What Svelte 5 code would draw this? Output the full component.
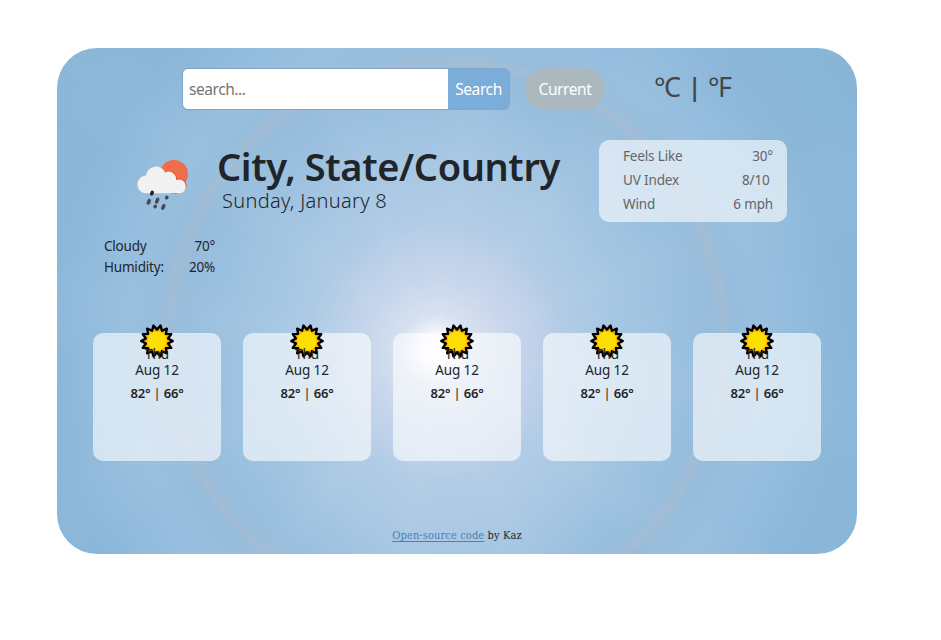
<script>
  const conditions = [
    { label: 'Feels Like', value: '30°' },
    { label: 'UV Index', value: '8/10\u00a0' },
    { label: 'Wind', value: '6 mph' }
  ];
  const days = Array.from({ length: 5 }, () => ({ day: 'Thu', date: 'Aug 12', high: 82, low: 66 }));

  // Alternating tips and notches around the sun's centre
  const sunPoints = Array.from({ length: 28 }, (_, i) => {
    const r = i % 2 ? 11.4 : 15.8;
    const a = (i * Math.PI) / 14 - Math.PI / 2 + Math.PI / 14;
    return `${(18 + r * Math.cos(a)).toFixed(2)},${(18 + r * Math.sin(a)).toFixed(2)}`;
  }).join(' ');
</script>

<main class="weather">
  <header class="toolbar">
    <form class="search" onsubmit={(e) => e.preventDefault()}>
      <input type="text" placeholder="search..." aria-label="search" />
      <button class="go">Search</button>
    </form>
    <button class="current">Current</button>
    <div class="units"><span>°C</span><b>|</b><span>°F</span></div>
  </header>

  <section class="overview">
    <svg class="cloud" width="54" height="54" viewBox="0 0 54 54" aria-hidden="true">
      <circle cx="39" cy="15" r="14" fill="#ee6e4c" />
      <g transform="translate(.6 .3)">
        <path d="M9 34a9 9 0 0 1 1.400-17.800A10 10 0 0 1 29.500 13.300A7.500 7.500 0 0 1 40.500 20.700A7 7 0 1 1 42 34Z" fill="none" stroke="#ef4f27" stroke-width="1.600" clip-path="circle(13.500px at 38.400px 14.700px)" />
        <path d="M9 34a9 9 0 0 1 1.400-17.800A10 10 0 0 1 29.500 13.300A7.500 7.500 0 0 1 40.500 20.700A7 7 0 1 1 42 34Z" fill="#f1f1f2" />
      </g>
      <g stroke="#4a4a4c" stroke-width="3.500" stroke-linecap="round">
        <path d="M17.300 33.300l-.6 1.500" stroke="#222" />
        <path d="M14.300 41.500l-1 2.500M22.800 40.300l-1.200 2.700M31.900 38.300l-.2.500M20.300 47.300l-.2.400M28.900 46.700l-1.100 2.400" />
      </g>
    </svg>
    <div class="place">
      <h1>City, State/Country</h1>
      <p>Sunday, January 8</p>
    </div>
    <dl class="conditions">
      {#each conditions as item}
        <div><dt>{item.label}</dt><dd>{item.value}</dd></div>
      {/each}
    </dl>
  </section>

  <dl class="now">
    <div><dt>Cloudy</dt><dd>70°</dd></div>
    <div><dt>Humidity:</dt><dd>20%</dd></div>
  </dl>

  <section class="forecast">
    {#each days as d}
      <article>
        <svg class="sun" width="36" height="36" viewBox="0 0 36 36" aria-hidden="true">
          <polygon points={sunPoints} fill="#ffb400" stroke="#000" stroke-width="2.400" stroke-linejoin="round" />
          <circle cx="18" cy="18" r="9.600" fill="#fddf00" />
        </svg>
        <span class="day">{d.day}</span>
        <span class="date">{d.date}</span>
        <strong>{d.high}° <i>|</i> {d.low}°</strong>
      </article>
    {/each}
  </section>

  <footer><a href="#source">Open-source code</a> by Kaz</footer>
</main>

<style>
  :global(body) {
    margin: 0;
    background: #fff;
  }
  .weather {
    box-sizing: border-box;
    width: 800px;
    height: 506px;
    margin: 48px 0 0 57px;
    padding-top: 20px;
    border-radius: 40px;
    overflow: hidden;
    display: flex;
    flex-direction: column;
    font-family: 'Noto Sans', 'Open Sans', sans-serif;
    font-size: 14px;
    color: #212529;
    background:
      radial-gradient(circle at 389px 292px, transparent 268px, rgba(190, 188, 200, 0.3) 279px, transparent 287px),
      radial-gradient(circle at 379px 302px, #fff 0, rgba(255, 255, 255, 0.85) 14px, rgba(255, 255, 255, 0.34) 36px, rgba(255, 255, 255, 0.14) 75px, transparent 130px),
      repeating-conic-gradient(from 8deg at 379px 302px, rgba(255, 255, 255, 0.025) 0deg, transparent 9deg, transparent 21deg, rgba(255, 255, 255, 0.025) 30deg),
      radial-gradient(ellipse 170px 320px at 389px 340px, rgba(200, 212, 235, 0.4), transparent),
      radial-gradient(circle at 389px 300px, #c4d0e7 0, #b8cce6 85px, #accae5 130px, #a4c6e2 180px, #9cc1e0 230px, #96bcdb 278px, #98bfdf 320px, #8cb7d9 395px, #88b5d7 500px);
  }
  button,
  input {
    font: inherit;
    font-size: 15.500px;
    padding: 0;
    border: 0;
    box-sizing: border-box;
  }
  .toolbar {
    display: flex;
    height: 42px;
    padding-left: 125px;
  }
  .search {
    display: flex;
    box-sizing: border-box;
    width: 328px;
    border: 1px solid rgba(105, 140, 175, 0.5);
    border-radius: 6px;
    overflow: hidden;
  }
  .search input {
    width: 265px;
    padding: 0 0 1px 6px;
    background: #fff;
    letter-spacing: -0.45px;
    outline: 0;
  }
  .search input::placeholder {
    color: #757575;
    opacity: 1;
  }
  .go {
    flex: 1;
    background: #7aadda;
    color: #fff;
    letter-spacing: -0.4px;
  }
  .current {
    width: 80px;
    margin-left: 15px;
    border-radius: 21px;
    background: #abb8be;
    color: #fff;
    letter-spacing: -0.4px;
  }
  .units {
    display: flex;
    align-items: center;
    gap: 8px;
    height: 36px;
    margin-left: 49px;
    font-size: 27px;
    font-weight: 400;
    letter-spacing: -1.500px;
    color: #43474b;
  }
  .units b {
    font-weight: 600;
    font-size: 25px;
  }
  .overview {
    display: flex;
    align-items: flex-start;
    height: 82px;
    margin-top: 30px;
    padding-left: 78px;
  }
  .cloud {
    margin-top: 19px;
  }
  .place {
    width: 382px;
    margin-left: 28px;
    white-space: nowrap;
  }
  h1 {
    margin: 2px 0 0;
    font-size: 38px;
    line-height: 48px;
    font-weight: 600;
    letter-spacing: -0.4px;
  }
  .place p {
    margin: -3px 0 0 5px;
    font-size: 20px;
    line-height: 28px;
    font-weight: 300;
    letter-spacing: 0.3px;
  }
  dl,
  dd {
    margin: 0;
  }
  dl div {
    display: flex;
    justify-content: space-between;
  }
  .conditions {
    box-sizing: border-box;
    width: 188px;
    height: 82px;
    padding: 4px 14px 0 24px;
    border-radius: 10px;
    background: rgba(255, 255, 255, 0.6);
    color: #626568;
    line-height: 24px;
    font-size: 13.500px;
    letter-spacing: -0.15px;
  }
  .now {
    width: 111px;
    margin: 14px 0 0 47px;
    line-height: 21px;
    font-size: 13.500px;
    letter-spacing: -0.2px;
  }
  .forecast {
    display: flex;
    gap: 22px;
    margin: 55px 0 0 36px;
  }
  article {
    position: relative;
    box-sizing: border-box;
    width: 128px;
    height: 128px;
    padding-top: 13px;
    border-radius: 10px;
    background: rgba(255, 255, 255, 0.6);
    display: flex;
    flex-direction: column;
    align-items: center;
    line-height: 16px;
    font-size: 13.500px;
  }
  .sun {
    position: absolute;
    top: -10px;
    left: 46px;
  }
  .day,
  .date {
    position: relative;
    letter-spacing: -0.1px;
  }
  strong {
    margin-top: 7px;
    font-weight: 600;
    font-size: 13px;
    letter-spacing: -0.2px;
  }
  strong i {
    font-style: normal;
    color: #6b4a2c;
  }
  footer {
    margin-top: 67px;
    text-align: center;
    font: 11px/16px 'DejaVu Serif Condensed', 'DejaVu Serif', serif;
    font-stretch: condensed;
    letter-spacing: 0.1px;
  }
  footer a {
    color: #4682b4;
    text-underline-offset: 2px;
  }
</style>
